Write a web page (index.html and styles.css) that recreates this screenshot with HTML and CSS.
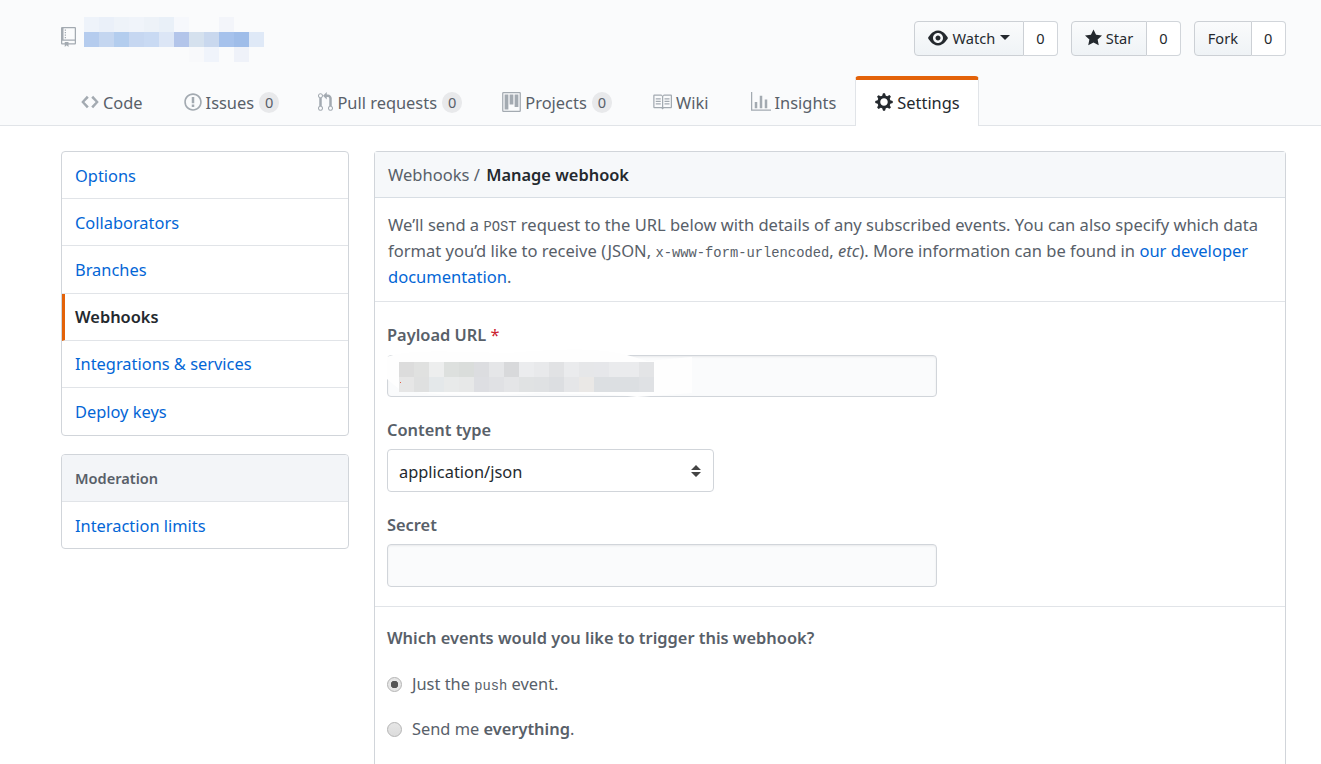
FILE: index.html
```html
<!DOCTYPE html>
<html lang="en">
<head>
    <meta charset="UTF-8" />
    <title>Manage webhook</title>
    <link rel="stylesheet" href="styles.css">
</head>
<body>

    <header class="repo-head">
        <div class="repo-top">
            <div class="repo-title">
                <svg class="repo-icon" viewBox="0 0 12 16"><path d="M4 9H3V8h1v1zm0-3H3v1h1V6zm0-2H3v1h1V4zm0-2H3v1h1V2zm8-1v12c0 .55-.45 1-1 1H6v2l-1.5-1.5L3 16v-2H1c-.55 0-1-.45-1-1V1c0-.55.45-1 1-1h10c.55 0 1 .45 1 1zm-1 10H1v2h2v-1h3v1h5v-2zm0-10H2v9h9V1z"/></svg>
                <svg class="repo-blur" viewBox="0 0 180 45">
                    <rect x="0" y="0" width="15" height="15" fill="#eef3fa"/><rect x="15" y="0" width="15" height="15" fill="#eaf0f9"/><rect x="30" y="0" width="15" height="15" fill="#eef3f9"/><rect x="45" y="0" width="15" height="15" fill="#f0f4fa"/><rect x="60" y="0" width="15" height="15" fill="#edf2f8"/><rect x="75" y="0" width="15" height="15" fill="#e9f0f8"/><rect x="90" y="0" width="15" height="15" fill="#f6f8fc"/><rect x="135" y="0" width="15" height="15" fill="#f3f5fa"/>
                    <rect x="0" y="15" width="15" height="15" fill="#b5ccee"/><rect x="15" y="15" width="15" height="15" fill="#c4d6f0"/><rect x="30" y="15" width="15" height="15" fill="#b3cdee"/><rect x="45" y="15" width="15" height="15" fill="#c6d7f1"/><rect x="60" y="15" width="15" height="15" fill="#c9daf3"/><rect x="75" y="15" width="15" height="15" fill="#dce6f6"/><rect x="90" y="15" width="15" height="15" fill="#b3c5ea"/><rect x="105" y="15" width="15" height="15" fill="#d5e1ee"/><rect x="120" y="15" width="15" height="15" fill="#c9d8ee"/><rect x="135" y="15" width="15" height="15" fill="#a6c2ec"/><rect x="150" y="15" width="15" height="15" fill="#9fbde9"/><rect x="165" y="15" width="15" height="15" fill="#dfe9f7"/>
                    <rect x="105" y="30" width="15" height="15" fill="#f8f9fb"/><rect x="120" y="30" width="15" height="15" fill="#f0f4fb"/><rect x="150" y="30" width="15" height="15" fill="#eff2f9"/>
                </svg>
            </div>
            <ul class="actions">
                <li class="action">
                    <a class="action-btn" href="#"><svg class="icon icon-eye" viewBox="0 0 16 16"><path d="M8.06 2C3 2 0 8 0 8s3 6 8.06 6C13 14 16 8 16 8s-3-6-7.94-6zM8 12c-2.2 0-4-1.78-4-4 0-2.2 1.8-4 4-4 2.22 0 4 1.8 4 4 0 2.22-1.78 4-4 4zm2-4c0 1.11-.89 2-2 2-1.11 0-2-.89-2-2 0-1.11.89-2 2-2 1.11 0 2 .89 2 2z"/></svg>Watch<span class="caret"></span></a>
                    <a class="action-count" href="#">0</a>
                </li>
                <li class="action">
                    <a class="action-btn" href="#"><svg class="icon icon-star" viewBox="0 0 14 16"><path d="M14 6l-4.9-.64L7 1 4.9 5.36 0 6l3.6 3.26L2.67 14 7 11.67 11.33 14l-.93-4.74L14 6z"/></svg>Star</a>
                    <a class="action-count" href="#">0</a>
                </li>
                <li class="action">
                    <a class="action-btn" href="#">Fork</a>
                    <a class="action-count" href="#">0</a>
                </li>
            </ul>
        </div>
        <nav class="tabs">
            <a class="tab" href="#"><svg class="tab-icon" width="18" height="20" viewBox="0 0 14 16"><path d="M9.5 3L8 4.5 11.5 8 8 11.5 9.5 13 14 8 9.5 3zm-5 0L0 8l4.5 5L6 11.5 2.5 8 6 4.5 4.5 3z"/></svg>Code</a>
            <a class="tab" href="#"><svg class="tab-icon" width="18" height="20" viewBox="0 0 14 16"><path d="M7 2.3c3.14 0 5.7 2.56 5.7 5.7s-2.56 5.7-5.7 5.7A5.71 5.71 0 0 1 1.3 8c0-3.14 2.56-5.7 5.7-5.7zM7 1C3.14 1 0 4.14 0 8s3.14 7 7 7 7-3.14 7-7-3.14-7-7-7zm1 3H6v5h2V4zm0 6H6v2h2v-2z"/></svg>Issues<span class="counter">0</span></a>
            <a class="tab" href="#"><svg class="tab-icon" width="15" height="20" viewBox="0 0 12 16"><path d="M11 11.28V5c-.03-.78-.34-1.47-.94-2.06C9.46 2.35 8.78 2.03 8 2H7V0L4 3l3 3V4h1c.27.02.48.11.69.31.21.2.3.42.31.69v6.28A1.993 1.993 0 0 0 10 15a1.993 1.993 0 0 0 1-3.72zm-1 2.92c-.66 0-1.2-.55-1.2-1.2 0-.65.55-1.2 1.2-1.2.65 0 1.2.55 1.2 1.2 0 .65-.55 1.2-1.2 1.2zM4 3c0-1.11-.89-2-2-2a1.993 1.993 0 0 0-1 3.72v6.56A1.993 1.993 0 0 0 2 15a1.993 1.993 0 0 0 1-3.72V4.72c.59-.34 1-.98 1-1.72zm-.8 10c0 .66-.55 1.2-1.2 1.2-.65 0-1.2-.55-1.2-1.2 0-.65.55-1.2 1.2-1.2.65 0 1.2.55 1.2 1.2zM2 4.2C1.34 4.2.8 3.65.8 3c0-.65.55-1.2 1.2-1.2.65 0 1.2.55 1.2 1.2 0 .65-.55 1.2-1.2 1.2z"/></svg>Pull requests<span class="counter">0</span></a>
            <a class="tab" href="#"><svg class="tab-icon" width="19" height="20" viewBox="0 0 15 16"><path fill-rule="evenodd" d="M10 12h3V2h-3v10zm-4-2h3V2H6v8zm-4 4h3V2H2v12zm-1 1h13V1H1v14zM14 0H1a1 1 0 0 0-1 1v14a1 1 0 0 0 1 1h13a1 1 0 0 0 1-1V1a1 1 0 0 0-1-1z"/></svg>Projects<span class="counter">0</span></a>
            <a class="tab" href="#"><svg class="tab-icon" width="20" height="20" viewBox="0 0 16 16"><path d="M3 5h4v1H3V5zm0 3h4V7H3v1zm0 2h4V9H3v1zm11-5h-4v1h4V5zm0 2h-4v1h4V7zm0 2h-4v1h4V9zm2-6v9c0 .55-.45 1-1 1H9.5l-1 1-1-1H2c-.55 0-1-.45-1-1V3c0-.55.45-1 1-1h5.5l1 1 1-1H15c.55 0 1 .45 1 1zm-8 .5L7.5 3H2v9h6V3.5zm7-.5H9.5l-.5.5V12h6V3z"/></svg>Wiki</a>
            <a class="tab" href="#"><svg class="tab-icon" width="20" height="20" viewBox="0 0 16 16"><path d="M16 14v1H0V0h1v14h15zM5 13H3V8h2v5zm4 0H7V3h2v10zm4 0h-2V6h2v7z"/></svg>Insights</a>
            <a class="tab tab-selected" href="#"><svg class="tab-icon" width="18" height="20" viewBox="0 0 14 16"><path d="M14 8.77v-1.6l-1.94-.64-.45-1.09.88-1.84-1.13-1.13-1.81.91-1.09-.45-.69-1.92h-1.6l-.63 1.94-1.11.45-1.84-.88-1.13 1.13.91 1.81-.45 1.09L0 7.23v1.59l1.94.64.45 1.09-.88 1.84 1.13 1.13 1.81-.91 1.09.45.69 1.92h1.59l.63-1.94 1.11-.45 1.84.88 1.13-1.13-.92-1.81.47-1.09L14 8.75v.02zM7 11c-1.66 0-3-1.34-3-3s1.34-3 3-3 3 1.34 3 3-1.34 3-3 3z"/></svg>Settings</a>
        </nav>
    </header>

    <div class="content">
        <aside class="side">
            <div class="menu">
                <a class="menu-item" href="#">Options</a>
                <a class="menu-item" href="#">Collaborators</a>
                <a class="menu-item" href="#">Branches</a>
                <a class="menu-item menu-selected" href="#">Webhooks</a>
                <a class="menu-item" href="#">Integrations &amp; services</a>
                <a class="menu-item" href="#">Deploy keys</a>
            </div>
            <div class="menu">
                <div class="menu-head">Moderation</div>
                <a class="menu-item" href="#">Interaction limits</a>
            </div>
        </aside>

        <main class="panel">
            <div class="panel-head">Webhooks / <strong>Manage webhook</strong></div>
            <p class="panel-intro">We’ll send a <code>POST</code> request to the URL below with details of any subscribed events. You can also specify which data format you’d like to receive (JSON, <code>x-www-form-urlencoded</code>, <em>etc</em>). More information can be found in <a href="#">our developer documentation</a>.</p>

            <form class="hook-form">
                <div class="field">
                    <label for="payload">Payload URL <span class="required">*</span></label>
                    <div class="input-wrap">
                        <input class="text-input" type="text" id="payload">
                        <svg class="url-blur" viewBox="0 0 305 48">
                            <path d="M0 8 C20 0 70 3 120 4 C170 0 210 -2 240 6 L260 12 L305 8 L305 44 L250 48 C220 44 180 46 150 44 C100 48 30 46 12 40 L0 30 Z" fill="#fefefe"/>
                            <rect x="12" y="13" width="15" height="15" fill="#dcdcdc"/><rect x="27" y="13" width="15" height="15" fill="#e0e1e0"/><rect x="42" y="13" width="15" height="15" fill="#edeeee"/><rect x="57" y="13" width="15" height="15" fill="#dde0de"/><rect x="72" y="13" width="15" height="15" fill="#dadddb"/><rect x="87" y="13" width="15" height="15" fill="#dcdde0"/><rect x="102" y="13" width="15" height="15" fill="#e5e6e8"/><rect x="117" y="13" width="15" height="15" fill="#d8d9db"/><rect x="132" y="13" width="15" height="15" fill="#ebecee"/><rect x="147" y="13" width="15" height="15" fill="#e8e9eb"/><rect x="162" y="13" width="15" height="15" fill="#e1e2e4"/><rect x="177" y="13" width="15" height="15" fill="#eaebed"/><rect x="192" y="13" width="15" height="15" fill="#e6e7e9"/><rect x="207" y="13" width="15" height="15" fill="#e6e7ea"/><rect x="222" y="13" width="15" height="15" fill="#eaebed"/><rect x="237" y="13" width="15" height="15" fill="#eaebed"/><rect x="252" y="13" width="15" height="15" fill="#e3e4e6"/>
                            <rect x="12" y="28" width="15" height="15" fill="#e6e6e6"/><rect x="27" y="28" width="15" height="15" fill="#dfe0e0"/><rect x="42" y="28" width="15" height="15" fill="#e4e8ea"/><rect x="57" y="28" width="15" height="15" fill="#e8eaea"/><rect x="72" y="28" width="15" height="15" fill="#e7e8e8"/><rect x="87" y="28" width="15" height="15" fill="#dddee2"/><rect x="102" y="28" width="15" height="15" fill="#e0e1e4"/><rect x="117" y="28" width="15" height="15" fill="#e4e5e7"/><rect x="132" y="28" width="15" height="15" fill="#e0e2e3"/><rect x="147" y="28" width="15" height="15" fill="#dfe1e3"/><rect x="162" y="28" width="15" height="15" fill="#dcdee1"/><rect x="177" y="28" width="15" height="15" fill="#e5e6e8"/><rect x="192" y="28" width="15" height="15" fill="#eae8e6"/><rect x="207" y="28" width="15" height="15" fill="#dcdfe2"/><rect x="222" y="28" width="15" height="15" fill="#dcdfe2"/><rect x="237" y="28" width="15" height="15" fill="#dcdfe2"/><rect x="252" y="28" width="15" height="15" fill="#dfe1e4"/>
                            <rect x="13" y="33" width="1" height="1" fill="#e0604a"/>
                        </svg>
                    </div>
                </div>
                <div class="field">
                    <label for="ctype">Content type</label>
                    <select class="select-input" id="ctype">
                        <option>application/json</option>
                    </select>
                </div>
                <div class="field">
                    <label for="secret">Secret</label>
                    <input class="text-input" type="text" id="secret">
                </div>
            </form>

            <div class="events">
                <h3 class="events-title">Which events would you like to trigger this webhook?</h3>
                <label class="radio-row"><input type="radio" name="events" checked>Just the <code>push</code> event.</label>
                <label class="radio-row"><input type="radio" name="events">Send me <strong>everything</strong>.</label>
            </div>
        </main>
    </div>

</body>
</html>
```

FILE: styles.css
```css
* {
    box-sizing: border-box;
}
html, body {
    height: 764px;
    overflow: hidden;
}
body {
    margin: 0;
    font-family: 'Noto Sans', sans-serif;
    font-size: 16.4px;
    color: #24292e;
    background: #fff;
}
a {
    color: #0366d6;
    text-decoration: none;
}
code {
    font-family: 'Liberation Mono', monospace;
    font-size: 13.8px;
    line-height: 1;
}

/* repo header */
.repo-head {
    height: 126px;
    padding: 0 35px 0 61px;
    background: #fafbfc;
    border-bottom: 1px solid #e1e4e8;
}
.repo-top {
    display: flex;
    justify-content: space-between;
    height: 76px;
}
.repo-title {
    display: flex;
    align-items: flex-start;
    padding-top: 17px;
}
.repo-icon {
    width: 15px;
    height: 20px;
    margin: 10px 8px 0 0;
    fill: #a3aab1;
}
.repo-blur {
    width: 180px;
    height: 45px;
}
.actions {
    display: flex;
    gap: 13px;
    margin: 21px 0 0;
    padding: 0;
    list-style: none;
}
.action {
    display: flex;
    height: 35px;
    font-size: 14.6px;
}
.action-btn {
    display: flex;
    align-items: center;
    padding: 0 12.5px 2px;
    color: #24292e;
    background: linear-gradient(#fafbfc, #eff3f6);
    border: 1px solid #ccd0d5;
    border-radius: 4px 0 0 4px;
}
.action-count {
    display: flex;
    align-items: center;
    justify-content: center;
    width: 34.5px;
    padding-bottom: 2px;
    color: #24292e;
    background: #fff;
    border: 1px solid #d1d5da;
    border-left: 0;
    border-radius: 0 4px 4px 0;
}
.icon {
    fill: #24292e;
    margin-right: 5px;
}
.icon-eye {
    width: 20px;
    height: 20px;
}
.icon-star {
    width: 17px;
    height: 20px;
    margin-right: 4px;
}
.caret {
    margin-left: 5px;
    border: 5px solid transparent;
    border-top-color: #24292e;
    border-bottom: 0;
}

/* tabs */
.tabs {
    display: flex;
    height: 50px;
}
.tab {
    display: flex;
    align-items: center;
    height: 50px;
    padding: 2px 20px 0;
    color: #586069;
}
.tab:nth-child(1) {
    padding-right: 21px;
}
.tab:nth-child(2) {
    padding-right: 19px;
}
.tab:nth-child(5) {
    padding-right: 22px;
}
.tab:nth-child(6) {
    padding-right: 19px;
}
.tab-icon {
    flex: none;
    margin-right: 4px;
    fill: #a3aab1;
}
.counter {
    display: inline-block;
    margin-left: 5px;
    padding: 0 6px;
    font-size: 14.6px;
    line-height: 21px;
    color: #586069;
    background: rgba(27, 31, 35, 0.08);
    border-radius: 20px;
}
.tab-selected {
    color: #24292e;
    background: #fff;
    border: 1px solid #e1e4e8;
    border-top: 4px solid #e36209;
    border-bottom: 0;
    border-radius: 4px 4px 0 0;
    padding: 0 18px 2px 19px;
}
.tab-selected .tab-icon {
    fill: #24292e;
}

/* page */
.content {
    display: flex;
    gap: 25px;
    padding: 25px 35px 0 61px;
}
.side {
    flex: none;
    width: 288px;
}
.menu {
    display: flex;
    flex-direction: column;
    margin-bottom: 18px;
    background: #fff;
    border: 1px solid #d1d5da;
    border-radius: 4px;
    overflow: hidden;
}
.menu-item {
    display: flex;
    align-items: center;
    height: 47.2px;
    padding: 0 13px;
    border-bottom: 1px solid #e1e4e8;
}
.menu-item:last-child {
    border-bottom: 0;
}
.menu-selected {
    font-weight: 600;
    color: #24292e;
    border-left: 3px solid #e36209;
    padding-left: 10px;
}
.menu-head {
    height: 47px;
    padding: 0 13px;
    line-height: 47px;
    font-size: 14.6px;
    font-weight: 600;
    color: #586069;
    background: #f3f5f8;
    border-bottom: 1px solid #e1e4e8;
}
.menu-head + .menu-item {
    height: 46px;
}

/* main panel */
.panel {
    flex: 1;
    height: 640px;
    font-size: 16.55px;
    border: 1px solid #d1d5da;
    border-bottom: 0;
    border-radius: 4px 4px 0 0;
    color: #586069;
}
.panel-head {
    height: 46px;
    padding: 0 13px;
    line-height: 45px;
    background: #f6f8fa;
    border-bottom: 1px solid #d8dee4;
}
.panel-head strong {
    margin-left: 2px;
    font-size: 16.4px;
    font-weight: 600;
    color: #24292e;
}
.panel-intro {
    margin: 0;
    padding: 14px 13px 11px;
    line-height: 26px;
    height: 104px;
    border-bottom: 1px solid #e1e4e8;
}
.hook-form {
    padding: 19px 12px 19px;
    border-bottom: 1px solid #e1e4e8;
}
.field label {
    display: block;
    height: 34px;
    font-size: 16.4px;
    font-weight: 600;
    line-height: 30px;
}
.field:first-child label {
    line-height: 28px;
}
.field + .field {
    margin-top: 18px;
}
.required {
    font-weight: 400;
    color: #cb2431;
}
.input-wrap {
    position: relative;
    width: 550px;
}
.input-wrap .text-input {
    height: 42px;
}
.text-input {
    display: block;
    width: 550px;
    height: 43px;
    background: #fafbfc;
    border: 1px solid #d1d5da;
    border-radius: 4px;
    box-shadow: inset 0 1px 2px rgba(27, 31, 35, 0.075);
}
.url-blur {
    position: absolute;
    top: -6px;
    left: 0;
    width: 305px;
    height: 48px;
}
.select-input {
    display: block;
    width: 327px;
    height: 43px;
    padding: 2px 11px 0;
    font: inherit;
    font-size: 16.4px;
    color: #24292e;
    appearance: none;
    background: #fff url("data:image/svg+xml,%3Csvg xmlns='http://www.w3.org/2000/svg' width='12' height='14'%3E%3Cpath d='M6 1l5 5H1zM6 13L1 8h10z' fill='%23444'/%3E%3C/svg%3E") no-repeat right 11px center;
    border: 1px solid #d1d5da;
    border-radius: 4px;
}
.events {
    padding: 18px 12px 0;
}
.events-title {
    margin: 0;
    padding-bottom: 1px;
    font-size: 16.4px;
    font-weight: 600;
    line-height: 26px;
}
.radio-row {
    display: block;
    line-height: 26px;
    margin-top: 19px;
    font-size: 16.4px;
}
.radio-row strong {
    font-weight: 600;
}
.radio-row input {
    appearance: none;
    width: 15px;
    height: 15px;
    margin: 0 10px 0 0;
    vertical-align: -2px;
    background: linear-gradient(#e6e6e6, #dcdcdc);
    border: 1px solid #b4b4b4;
    border-radius: 50%;
}
.radio-row input:checked {
    background: radial-gradient(circle, #555 0 3.5px, #e6e6e6 4px);
}
```
